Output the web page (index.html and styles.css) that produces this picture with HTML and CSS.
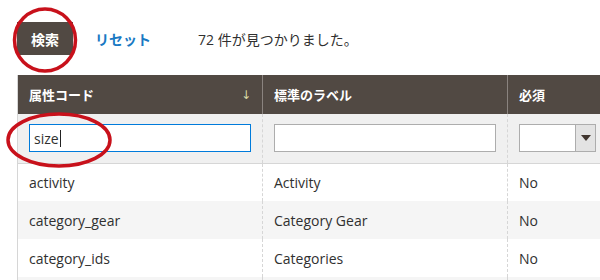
FILE: index.html
```html
<!DOCTYPE html>
<html lang="ja">
<head>
<meta charset="utf-8">
<title>属性</title>
<link rel="stylesheet" href="styles.css">
</head>
<body>
<div class="page">
  <div class="toolbar">
    <button class="btn">検索</button>
    <a class="reset" href="#">リセット</a>
    <span class="count">72 件が見つかりました。</span>
  </div>
  <table class="grid">
    <colgroup>
      <col class="c1"><col class="c2"><col class="c3">
    </colgroup>
    <thead>
      <tr class="head">
        <th><div class="th-in"><span>属性コード</span><span class="arrow">↓</span></div></th>
        <th>標準のラベル</th>
        <th>必須</th>
      </tr>
      <tr class="filters">
        <td><div class="field focused"><span>size</span><span class="caret"></span></div></td>
        <td><div class="field"></div></td>
        <td><div class="select"><span class="sel-val"></span><span class="sel-btn"><span class="tri"></span></span></div></td>
      </tr>
    </thead>
    <tbody>
      <tr><td>activity</td><td>Activity</td><td>No</td></tr>
      <tr class="alt"><td>category_gear</td><td>Category Gear</td><td>No</td></tr>
      <tr><td>category_ids</td><td>Categories</td><td>No</td></tr>
      <tr class="alt"><td>&nbsp;</td><td>&nbsp;</td><td>&nbsp;</td></tr>
    </tbody>
  </table>
  <svg class="marks" width="600" height="280" viewBox="0 0 600 280">
    <ellipse cx="45" cy="40" rx="30.5" ry="31" />
    <ellipse cx="59" cy="140" rx="51" ry="26" />
  </svg>
</div>
</body>
</html>
```
FILE: styles.css
```css
html, body {
  margin: 0;
  padding: 0;
  background: #ffffff;
}
body {
  width: 600px;
  height: 280px;
  overflow: hidden;
  font-family: "Open Sans", "Noto Sans CJK JP", sans-serif;
  font-size: 14px;
  color: #303030;
}
.page {
  position: relative;
  width: 600px;
  height: 280px;
  overflow: hidden;
}
.toolbar {
  display: flex;
  align-items: center;
  padding: 22px 0 0 17px;
  height: 33px;
}
.btn {
  height: 33px;
  width: 56px;
  padding: 0;
  border: none;
  background: #514943;
  color: #ffffff;
  font-family: "Noto Sans CJK JP", sans-serif;
  font-weight: 700;
  font-size: 14px;
}
.reset {
  margin-left: 22px;
  color: #1979c3;
  text-decoration: none;
  font-family: "Noto Sans CJK JP", sans-serif;
  font-weight: 700;
  font-size: 14px;
}
.count {
  margin-left: 47px;
  font-family: "Open Sans", "Noto Sans CJK JP", sans-serif;
  font-size: 14px;
  color: #303030;
}
.grid {
  margin: 20px 0 0 17px;
  border-collapse: collapse;
  table-layout: fixed;
  width: 589px;
  border-left: 1px solid #d6d6d6;
}
.c1 { width: 245px; }
.c2 { width: 245px; }
.c3 { width: 99px; }
.head th {
  height: 39px;
  padding: 0 11px;
  background: #514943;
  color: #ffffff;
  text-align: left;
  font-family: "Noto Sans CJK JP", sans-serif;
  font-weight: 700;
  font-size: 13px;
  border-left: 1px solid #8a837f;
  box-sizing: border-box;
}
.head th:first-child {
  border-left: none;
}
.th-in {
  display: flex;
  justify-content: space-between;
  align-items: center;
}
.arrow {
  color: #d9d9a6;
  font-family: "DejaVu Sans", sans-serif;
  font-weight: 400;
  font-size: 12px;
  margin-right: 0;
}
.filters td {
  height: 49px;
  padding: 0 11px;
  background: #f0f0f0;
  border-bottom: 1px solid #d6d6d6;
  border-left: 1px dashed #d6d6d6;
  box-sizing: border-box;
}
.filters td:first-child {
  border-left: none;
}
.field {
  height: 28px;
  box-sizing: border-box;
  border: 1px solid #adadad;
  background: #ffffff;
  display: flex;
  align-items: center;
  padding-left: 4px;
  font-size: 14px;
  color: #303030;
}
.field.focused {
  border-color: #007bdb;
}
.caret {
  display: inline-block;
  width: 1px;
  height: 17px;
  background: #222222;
  margin-left: 1px;
}
.select {
  height: 28px;
  box-sizing: border-box;
  border: 1px solid #adadad;
  background: #ffffff;
  display: flex;
  width: 77px;
}
.sel-val {
  flex: 1;
}
.sel-btn {
  width: 19px;
  background: #e3e3e3;
  border-left: 1px solid #adadad;
  display: flex;
  align-items: center;
  justify-content: center;
}
.tri {
  width: 0;
  height: 0;
  border-left: 5px solid transparent;
  border-right: 5px solid transparent;
  border-top: 6px solid #41362f;
}
tbody td {
  height: 38px;
  padding: 0 11px;
  border-left: 1px dashed #d6d6d6;
  box-sizing: border-box;
  background: #ffffff;
  font-size: 14px;
  color: #303030;
  white-space: nowrap;
}
tbody td:first-child {
  border-left: none;
}
tbody tr.alt td {
  background: #f5f5f5;
}
.marks {
  position: absolute;
  left: 0;
  top: 0;
  pointer-events: none;
}
.marks ellipse {
  fill: none;
  stroke: #c8111b;
  stroke-width: 3.5;
}
```
